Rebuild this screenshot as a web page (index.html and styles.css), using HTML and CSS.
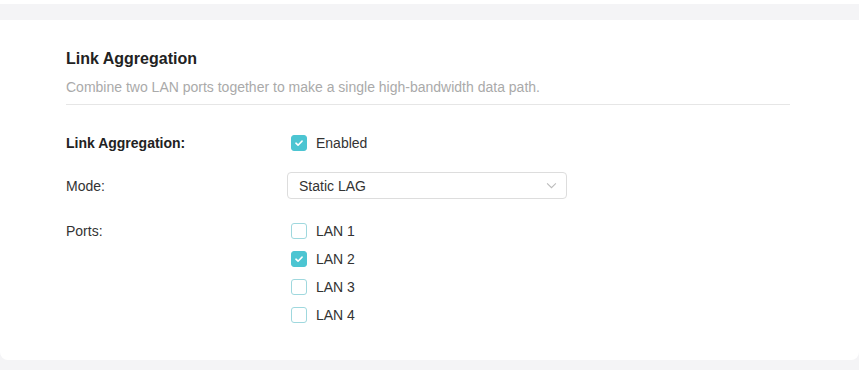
FILE: index.html
```html
<!DOCTYPE html>
<html lang="en">
<head>
    <meta charset="UTF-8">
    <title>Link Aggregation</title>
    <link rel="stylesheet" href="styles.css">
</head>
<body>
    <div class="band"></div>

    <section class="card">
        <h2 class="title">Link Aggregation</h2>
        <p class="desc">Combine two LAN ports together to make a single high-bandwidth data path.</p>

        <div class="form">
            <div class="row">
                <label class="label strong">Link Aggregation:</label>
                <div class="field">
                    <span class="check on"><svg viewBox="0 0 16 16"><path d="M4.5 8.2l2.4 2.3 4.6-4.6"/></svg></span>
                    <span>Enabled</span>
                </div>
            </div>

            <div class="row">
                <label class="label">Mode:</label>
                <div class="select">
                    <span>Static LAG</span>
                    <svg viewBox="0 0 12 8"><path d="M1 1.5l5 5 5-5"/></svg>
                </div>
            </div>

            <div class="row top">
                <label class="label">Ports:</label>
                <div class="ports">
                    <div class="field"><span class="check"></span><span>LAN 1</span></div>
                    <div class="field"><span class="check on"><svg viewBox="0 0 16 16"><path d="M4.5 8.2l2.4 2.3 4.6-4.6"/></svg></span><span>LAN 2</span></div>
                    <div class="field"><span class="check"></span><span>LAN 3</span></div>
                    <div class="field"><span class="check"></span><span>LAN 4</span></div>
                </div>
            </div>
        </div>
    </section>
</body>
</html>
```

FILE: styles.css
```css
body {
    margin: 0;
    padding-top: 4px;
    font-family: "Liberation Sans", Arial, sans-serif;
    color: #333;
    background: #f4f4f6;
    height: 366px;
    overflow: hidden;
}

/* 顶部白边 */
body::before {
    content: "";
    display: block;
    height: 4px;
    margin-top: -4px;
    background: #fff;
}

.band {
    height: 16px;
}

.card {
    background: #fff;
    border-radius: 0 0 8px 8px;
    padding: 30px 69px 0 66px;
    height: 310px;
}

.title {
    margin: 0;
    font-size: 16px;
    font-weight: bold;
    color: #222;
    line-height: 18px;
}

.desc {
    margin: 11px 0 0;
    padding-bottom: 8px;
    font-size: 14px;
    color: #aaa;
    border-bottom: 1px solid #e6e6e6;
    line-height: 17px;
}

.form {
    padding-top: 29px;
}

.row {
    display: flex;
    align-items: center;
    font-size: 14px;
    margin-bottom: 20px;
}

.row.top {
    align-items: flex-start;
    margin-top: 23px;
}

.label {
    width: 225px;
    line-height: 18px;
}

.strong {
    font-weight: bold;
    color: #222;
}

.field {
    display: flex;
    align-items: center;
    gap: 9px;
    height: 18px;
}

.ports {
    display: flex;
    flex-direction: column;
    gap: 10px;
}

.check {
    width: 14px;
    height: 14px;
    border: 1px solid #9fd8de;
    border-radius: 3px;
    background: #fff;
    display: flex;
}

.check.on {
    background: #4cc5d2;
    border-color: #4cc5d2;
}

.check svg {
    width: 14px;
    height: 14px;
    fill: none;
    stroke: #fff;
    stroke-width: 1.8;
    stroke-linecap: round;
    stroke-linejoin: round;
}

.select {
    margin-left: -4px;
    width: 258px;
    height: 25px;
    border: 1px solid #ddd;
    border-radius: 4px;
    display: flex;
    align-items: center;
    justify-content: space-between;
    padding: 0 9px 0 11px;
}

.select svg {
    width: 11px;
    height: 7px;
    fill: none;
    stroke: #bbb;
    stroke-width: 1.2;
}
```
